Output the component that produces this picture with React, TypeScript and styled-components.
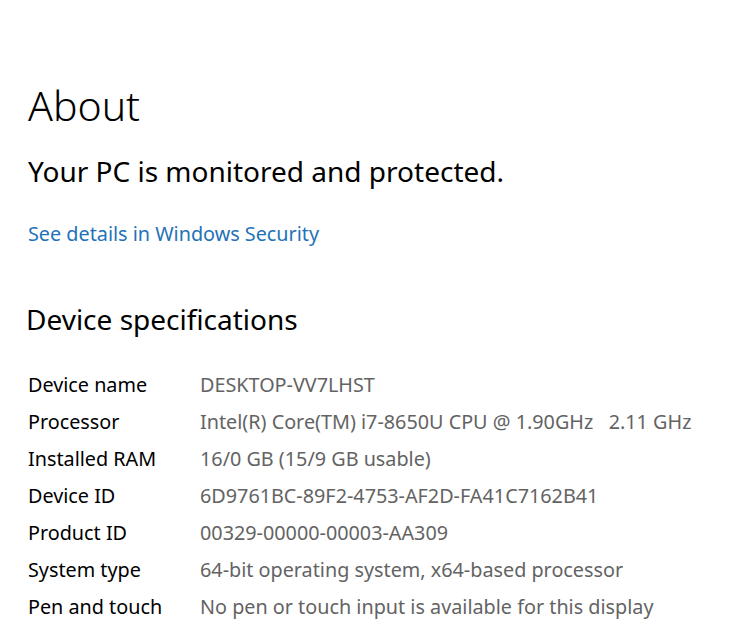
import React from "react";
import styled, { createGlobalStyle } from "styled-components";

const GlobalStyle = createGlobalStyle`
  html, body {
    margin: 0;
    padding: 0;
    background: #fff;
  }
  body {
    font-family: "Noto Sans", "Open Sans", sans-serif;
    color: #000;
  }
`;

const Page = styled.div`
  width: 742px;
  height: 640px;
  overflow: hidden;
  padding: 80px 0 0 28px;
  box-sizing: border-box;
`;

const Title = styled.h1`
  margin: 0;
  font-size: 41px;
  font-weight: 300;
  line-height: 50px;
`;

const Status = styled.div`
  margin-top: 23px;
  font-size: 28px;
  font-weight: 400;
  line-height: 36px;
`;

const Link = styled.a`
  display: block;
  margin-top: 32px;
  font-size: 19.8px;
  line-height: 26px;
  color: #1f72b8;
  text-decoration: none;
`;

const SectionTitle = styled.h2`
  margin: 54px 0 0 -2px;
  font-size: 28px;
  font-weight: 400;
  line-height: 36px;
`;

const SpecList = styled.div`
  margin-top: 29px;
  display: grid;
  grid-template-columns: 172px auto;
`;

const Label = styled.div`
  font-size: 19.8px;
  line-height: 37px;
  color: #000;
`;

const Value = styled.div`
  font-size: 19.8px;
  line-height: 37px;
  color: #636363;
  white-space: pre;
`;

const specs: [string, string][] = [
  ["Device name", "DESKTOP-VV7LHST"],
  ["Processor", "Intel(R) Core(TM) i7-8650U CPU @ 1.90GHz   2.11 GHz"],
  ["Installed RAM", "16/0 GB (15/9 GB usable)"],
  ["Device ID", "6D9761BC-89F2-4753-AF2D-FA41C7162B41"],
  ["Product ID", "00329-00000-00003-AA309"],
  ["System type", "64-bit operating system, x64-based processor"],
  ["Pen and touch", "No pen or touch input is available for this display"],
];

export default function App() {
  return (
    <>
      <GlobalStyle />
      <Page>
        <Title>About</Title>
        <Status>Your PC is monitored and protected.</Status>
        <Link href="#">See details in Windows Security</Link>
        <SectionTitle>Device specifications</SectionTitle>
        <SpecList>
          {specs.map(([k, v]) => (
            <React.Fragment key={k}>
              <Label>{k}</Label>
              <Value>{v}</Value>
            </React.Fragment>
          ))}
        </SpecList>
      </Page>
    </>
  );
}
